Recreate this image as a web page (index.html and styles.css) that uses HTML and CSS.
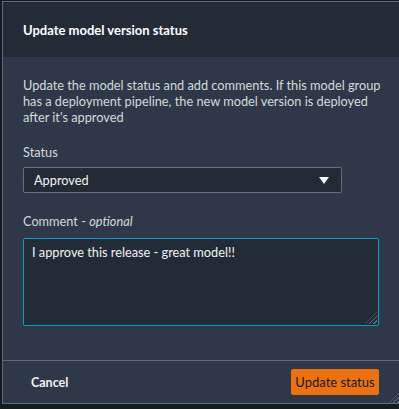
FILE: index.html
```html
<!doctype html>
<html lang="en">
<head>
    <meta charset="utf-8">
    <title>Update model version status</title>
    <link rel="stylesheet" href="styles.css">
</head>
<body>
<div class="modal">
    <div class="modal-header">
        <h2>Update model version status</h2>
    </div>
    <div class="modal-body">
        <p class="desc">Update the model status and add comments. If this model group<br>has a deployment pipeline, the new model version is deployed<br>after it's approved</p>
        <div class="field">
            <label class="field-label">Status</label>
            <div class="select">
                <span>Approved</span>
                <svg class="caret" width="10" height="7" viewBox="0 0 10 7"><polygon points="0,0 10,0 5,7" fill="#f2f3f3"/></svg>
            </div>
        </div>
        <div class="field">
            <label class="field-label">Comment - <i>optional</i></label>
            <div class="textarea-wrap">
                <textarea class="comment">I approve this release - great model!!</textarea>
                <span class="grip"></span>
            </div>
        </div>
    </div>
    <div class="modal-footer">
        <button class="btn-link">Cancel</button>
        <button class="btn-primary">Update status</button>
    </div>
    <span class="grip modal-grip"></span>
</div>
</body>
</html>
```

FILE: styles.css
```css
body {
	margin: 0;
	background-color: #16191f;
	font-family: "Lato", "Open Sans", sans-serif;
	font-size: 12.75px;
	color: #d5dbdb;
	overflow: hidden;
}
.modal {
	position: relative;
	margin: 1px 0 0 2px;
	width: 420px;
	border: 1px solid #5f6b7a;
	background-color: #2f3849;
}
.modal-header {
	height: 55px;
	background-color: #232b37;
	padding: 0 20px;
	display: flex;
	align-items: center;
}
.modal-header h2 {
	margin: 0;
	font-size: 13px;
	font-weight: 700;
	color: #ffffff;
}
.modal-body {
	padding: 20px 20px 34px 20px;
}
.desc {
	margin: 0;
	white-space: nowrap;
	line-height: 16px;
}
.field {
	margin-top: 19px;
}
.field + .field {
	margin-top: 20px;
}
.field-label {
	display: block;
	line-height: 16px;
	margin-bottom: 7px;
}
.field-label i {
	font-style: italic;
}
.select {
	width: 295px;
	height: 24px;
	border: 1px solid #687078;
	background-color: #232b37;
	border-radius: 2px;
	display: flex;
	align-items: center;
	justify-content: space-between;
	padding: 0 12px 0 10px;
	color: #f2f3f3;
}
.caret {
	display: block;
}
.textarea-wrap {
	position: relative;
	width: 356px;
	margin-top: 9px;
}
.comment {
	display: block;
	width: 356px;
	height: 88px;
	box-sizing: border-box;
	margin: 0;
	padding: 5px 8px;
	border: 1px solid #00a1c9;
	border-radius: 2px;
	background-color: #232b37;
	color: #f2f3f3;
	font-family: "Lato", "Open Sans", sans-serif;
	font-size: 12.75px;
	line-height: 16px;
	resize: none;
	outline: none;
}
.grip {
	position: absolute;
	right: 2px;
	bottom: 2px;
	width: 12px;
	height: 12px;
	background: repeating-linear-gradient(135deg, transparent 0 2px, #687078 2px 3px);
	clip-path: polygon(100% 0, 100% 100%, 0 100%);
}
.modal-footer {
	border-top: 1px solid #5f6b7a;
	height: 42px;
	padding: 0 20px;
	display: flex;
	align-items: center;
	justify-content: space-between;
	width: 356px;
}
.btn-link {
	background: none;
	border: none;
	padding: 0 8px;
	font-family: "Lato", sans-serif;
	font-size: 12.5px;
	font-weight: 700;
	color: #f2f3f3;
}
.btn-primary {
	width: 88px;
	height: 26px;
	border: none;
	border-radius: 2px;
	background-color: #ec7211;
	color: #16191f;
	font-family: "Lato", sans-serif;
	font-size: 13px;
	font-weight: 400;
	padding: 0;
	white-space: nowrap;
}
.modal-grip {
	right: auto;
	left: 386px;
	bottom: 0;
}
```
